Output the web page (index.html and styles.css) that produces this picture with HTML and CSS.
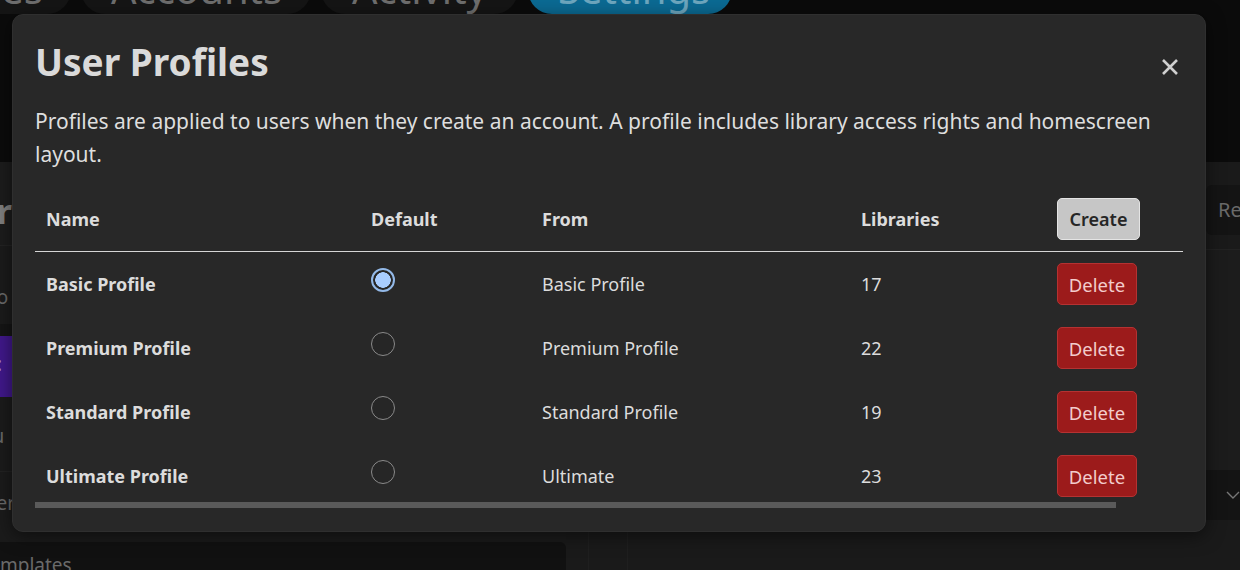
FILE: index.html
```html
<!DOCTYPE html>
<html>
<head>
<meta charset="utf-8">
<link rel="stylesheet" href="styles.css">
</head>
<body>
<div class="app">
  <header class="app-header">
    <nav class="tabs">
      <span class="tab tab-first">Profiles</span>
      <span class="tab">Accounts</span>
      <span class="tab">Activity</span>
      <span class="tab tab-active">Settings</span>
    </nav>
  </header>
  <main class="app-main">
    <section class="left-col">
      <div class="left-head"><span class="big-label">Manage Users Filter</span></div>
      <div class="left-row"><span class="row-label">Select a user pro</span></div>
      <div class="left-gap"></div>
      <div class="left-purple"><span class="purple-label">Default profile:</span></div>
      <div class="left-row2"><span class="row-label2">Add users to groups you</span></div>
      <div class="left-row3"><span class="row-label3">Other</span></div>
      <div class="left-bottom"><span class="bottom-label">Templates</span></div>
    </section>
    <section class="mid-col"></section>
    <section class="right-col">
      <div class="right-top"><span class="re-btn">Refresh</span></div>
      <div class="right-mid"></div>
      <div class="right-select"><svg class="chev" width="14" height="10" viewBox="0 0 14 10"><path d="M1 2 L7 8 L13 2" fill="none" stroke="#777" stroke-width="1.4"/></svg></div>
    </section>
  </main>
</div>

<div class="modal" role="dialog">
  <div class="modal-head">
    <h2 class="modal-title">User Profiles</h2>
    <button class="close-btn" aria-label="Close">
      <svg width="20" height="20" viewBox="0 0 20 20"><path d="M3 3 L17 17 M17 3 L3 17" stroke="#cfcfcf" stroke-width="2.6" stroke-linecap="butt"/></svg>
    </button>
  </div>
  <p class="modal-desc">Profiles are applied to users when they create an account. A profile includes library access rights and homescreen layout.</p>
  <div class="table-wrap">
    <table class="profiles">
      <thead>
        <tr>
          <th class="c-name">Name</th>
          <th class="c-default">Default</th>
          <th class="c-from">From</th>
          <th class="c-libs">Libraries</th>
          <th class="c-act"><button class="btn btn-create">Create</button></th>
        </tr>
      </thead>
      <tbody>
        <tr>
          <td class="c-name b">Basic Profile</td>
          <td class="c-default"><span class="radio checked"></span></td>
          <td class="c-from">Basic Profile</td>
          <td class="c-libs">17</td>
          <td class="c-act"><button class="btn btn-delete">Delete</button></td>
        </tr>
        <tr>
          <td class="c-name b">Premium Profile</td>
          <td class="c-default"><span class="radio"></span></td>
          <td class="c-from">Premium Profile</td>
          <td class="c-libs">22</td>
          <td class="c-act"><button class="btn btn-delete">Delete</button></td>
        </tr>
        <tr>
          <td class="c-name b">Standard Profile</td>
          <td class="c-default"><span class="radio"></span></td>
          <td class="c-from">Standard Profile</td>
          <td class="c-libs">19</td>
          <td class="c-act"><button class="btn btn-delete">Delete</button></td>
        </tr>
        <tr>
          <td class="c-name b">Ultimate Profile</td>
          <td class="c-default"><span class="radio"></span></td>
          <td class="c-from">Ultimate</td>
          <td class="c-libs">23</td>
          <td class="c-act"><button class="btn btn-delete">Delete</button></td>
        </tr>
      </tbody>
    </table>
  </div>
  <div class="hscroll"><div class="hscroll-thumb"></div></div>
</div>
</body>
</html>
```

FILE: styles.css
```css
* { box-sizing: border-box; }

html, body {
  margin: 0;
  padding: 0;
}

body {
  width: 1240px;
  height: 570px;
  overflow: hidden;
  position: relative;
  background: #1a1a1a;
  font-family: "Noto Sans", "Open Sans", sans-serif;
  color: #dcdcdc;
}

/* ---------- background app (dimmed) ---------- */
.app {
  display: flex;
  flex-direction: column;
  height: 570px;
}

.app-header {
  height: 162px;
  background: #0b0b0b;
  flex: none;
}

.tabs {
  display: flex;
  gap: 10px;
  margin-top: -34px;
  margin-left: -159px;
}

.tab {
  height: 48px;
  border-radius: 24px;
  background: #151515;
  color: #6e6e6e;
  font-size: 40px;
  line-height: 46px;
  padding: 0 30px;
  white-space: nowrap;
  width: 230px;
  text-align: center;
  overflow: hidden;
}

.tab-first { width: 230px; text-align: right; padding-right: 28px; }
.tab:nth-child(3) { width: 197px; }
.tab-active {
  width: 204px;
  background: #0b6a93;
  color: #6ea7bf;
}

.app-main {
  flex: 1;
  display: grid;
  grid-template-columns: 566px 62px 1fr;
}

.left-col {
  display: flex;
  flex-direction: column;
  overflow: hidden;
}

.left-head {
  height: 84px;
  background: #1c1c1c;
  border-bottom: 1px solid #232323;
  padding-top: 26px;
  white-space: nowrap;
}

.big-label {
  display: block;
  font-size: 34px;
  font-weight: 700;
  color: #7f7f7f;
  margin-left: -327px;
}

.left-row {
  height: 78px;
  background: #1b1b1b;
  padding-top: 38px;
  white-space: nowrap;
}

.row-label, .row-label2, .row-label3 {
  display: block;
  font-size: 19px;
  color: #6a6a6a;
}

.row-label { margin-left: -140px; }

.left-gap {
  height: 12px;
  background: #151515;
}

.left-purple {
  height: 61px;
  background: #40188a;
  padding-top: 15px;
  white-space: nowrap;
}

.purple-label {
  display: block;
  font-size: 19px;
  color: #a68bd6;
  margin-left: -131px;
}

.left-row2 {
  height: 75px;
  background: #1b1b1b;
  border-bottom: 1px solid #222;
  padding-top: 26px;
  white-space: nowrap;
}

.row-label2 { margin-left: -214px; }

.left-row3 {
  height: 68px;
  background: #1b1b1b;
  padding-top: 18px;
  white-space: nowrap;
}

.row-label3 { margin-left: -37px; }

.left-bottom {
  flex: 1;
  background: #111;
  border-top-right-radius: 6px;
  margin-top: 2px;
  padding-top: 10px;
  white-space: nowrap;
}

.bottom-label {
  display: block;
  font-size: 19px;
  color: #6a6a6a;
  margin-left: -20px;
}

.mid-col {
  border-left: 1px solid #1f1f1f;
  border-right: 1px solid #1f1f1f;
  margin-left: 22px;
}

.right-col {
  display: flex;
  flex-direction: column;
  overflow: hidden;
}

.right-top {
  height: 88px;
  background: #1a1a1a;
  border-bottom: 1px solid #222;
  padding: 23px 0 0 578px;
  white-space: nowrap;
}

.re-btn {
  display: inline-block;
  height: 50px;
  padding: 0 12px;
  background: #141414;
  border-radius: 6px;
  color: #6a6a6a;
  font-size: 20px;
  line-height: 50px;
}

.right-mid {
  height: 220px;
  background: #1c1c1c;
}

.right-select {
  height: 50px;
  background: #141414;
  display: flex;
  align-items: center;
  padding-left: 598px;
}

/* ---------- modal ---------- */
.modal {
  position: absolute;
  left: 12px;
  top: 14px;
  width: 1194px;
  height: 518px;
  background: #282828;
  border: 1px solid #2f2f2f;
  border-radius: 11px;
  box-shadow: 0 4px 18px rgba(0, 0, 0, 0.5);
  padding: 22px 22px 0 22px;
}

.modal-head {
  display: flex;
  align-items: center;
  justify-content: space-between;
  height: 50px;
}

.modal-title {
  margin: 0;
  font-size: 37px;
  line-height: 50px;
  font-weight: 700;
  color: #dadada;
}

.close-btn {
  background: none;
  border: 0;
  padding: 0;
  width: 20px;
  height: 20px;
  margin-right: 3px;
  margin-top: 10px;
  cursor: pointer;
}

.close-btn svg { display: block; }

.modal-desc {
  margin: 18px 0 0 0;
  font-size: 21px;
  line-height: 33px;
  color: #dedede;
}

.table-wrap {
  margin-top: 16px;
  width: 1148px;
  height: 315px;
  overflow: hidden;
}

.hscroll {
  width: 1148px;
  height: 6px;
}

.hscroll-thumb {
  width: 1081px;
  height: 6px;
  background: #5a5a5a;
}

.profiles {
  width: 1219px;
  border-collapse: collapse;
  table-layout: fixed;
}

.profiles th, .profiles td {
  padding: 0 11px;
  text-align: left;
  vertical-align: middle;
  height: 64px;
  font-size: 18px;
  color: #dcdcdc;
  white-space: nowrap;
}

.profiles th { font-weight: 700; }

.profiles thead tr { border-bottom: 1px solid #d6d6d6; }

.profiles tbody td { padding-top: 2px; }

.profiles td.b { font-weight: 700; }

.c-name { width: 325px; }
.c-default { width: 171px; }
.c-from { width: 319px; }
.c-libs { width: 196px; }
.c-act { width: 208px; }

.radio {
  display: inline-block;
  width: 24px;
  height: 24px;
  border-radius: 50%;
  border: 1.5px solid #8a8a8a;
  background: #262626;
  vertical-align: middle;
  position: relative;
  top: -5px;
}

.radio.checked {
  border: 2px solid #93b9e8;
  background: radial-gradient(circle, #a8cdff 0 7.5px, #262626 8px);
}

.btn {
  font-family: "Noto Sans", "Open Sans", sans-serif;
  font-size: 18px;
  border-radius: 5px;
  height: 42px;
  padding: 0 6px;
  cursor: pointer;
}

.btn-create {
  width: 83px;
  background: #c6c6c6;
  border: 1.5px solid #e4e4e4;
  color: #262626;
  font-weight: 600;
}

.btn-delete {
  width: 80px;
  font-size: 18.5px;
  background: #9c1b1b;
  border: 1.5px solid #b53232;
  color: #f2cccc;
}
```
